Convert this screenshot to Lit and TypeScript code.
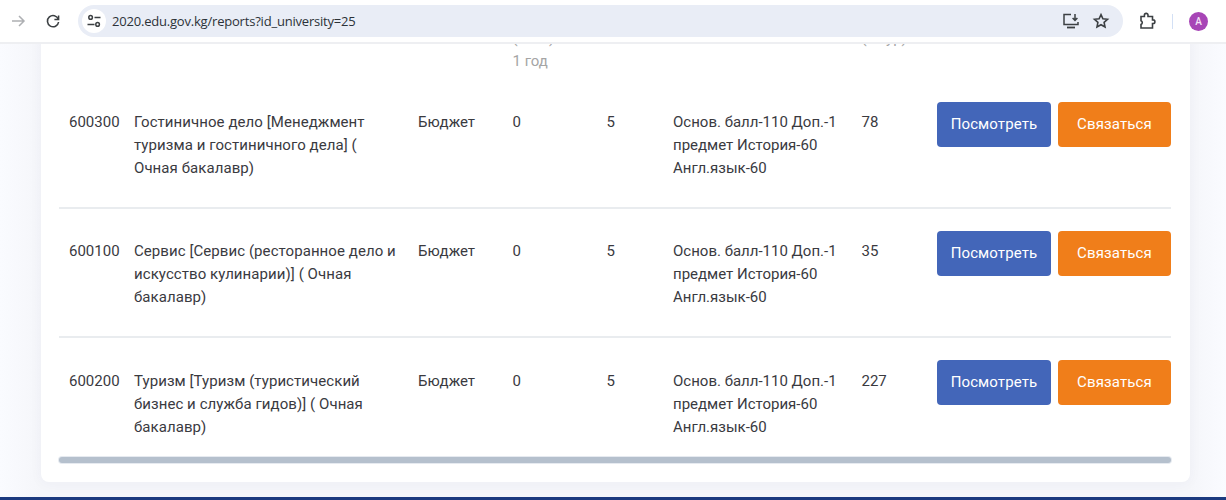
import { LitElement, html, css } from "lit";
import { customElement } from "lit/decorators.js";

const rows = [
  { code: "600300", name: "Гостиничное дело [Менеджмент туризма и гостиничного дела] ( Очная бакалавр)", score: "78" },
  { code: "600100", name: "Сервис [Сервис (ресторанное дело и искусство кулинарии)] ( Очная бакалавр)", score: "35" },
  { code: "600200", name: "Туризм [Туризм (туристический бизнес и служба гидов)] ( Очная бакалавр)", score: "227" },
];

@customElement("app-root")
export class AppRoot extends LitElement {
  static styles = css`
    :host { display: flex; flex-direction: column; width: 1226px; height: 500px; overflow: hidden; font-family: Roboto, sans-serif; background: #fff; }
    .toolbar { flex: none; box-sizing: border-box; display: flex; align-items: center; padding: 0 0 0 8px; background: #fff; border-bottom: 2px solid #eeeff2; height: 44px; }
    .navbtn { width: 20px; height: 20px; display: flex; flex: none; }
    .reload { margin-left: 15px; }
    .omni { flex: none; margin-left: 15px; width: 1045px; height: 32px; box-sizing: border-box; border-radius: 16px; background: #e9edf6; display: flex; align-items: center; padding: 0 13px 0 4px; }
    .tune { width: 24px; height: 24px; border-radius: 50%; background: #fff; display: flex; align-items: center; justify-content: center; flex: none; }
    .url { margin-left: 6px; font: 13px "Open Sans", sans-serif; letter-spacing: -0.2px; color: #2c3238; flex: 1; }
    .omni svg.i { margin-left: 10px; flex: none; }
    .omni svg.star { margin-left: 12px; }
    .ext { margin-left: 14px; flex: none; }
    .sep { width: 1px; height: 15px; background: #d3e0f5; margin-left: 15px; flex: none; }
    .avatar { width: 19px; height: 19px; border-radius: 50%; background: #a745b6; color: #f3e3f6; font: 500 10px Roboto, sans-serif; display: flex; align-items: center; justify-content: center; margin-left: 16px; flex: none; }

    .view { flex: 1; min-height: 0; overflow: hidden; display: flex; flex-direction: column; justify-content: flex-end; background: linear-gradient(90deg, #fafbff 0, #f5f6fa 41px, #f5f6fa 1190px, #fafbff 100%); }
    .wrap { flex: none; padding: 0 36px 0 41px; }
    .card { width: 1149px; box-sizing: border-box; background: #fff; border-radius: 0 0 8px 8px; padding: 0 19px 19px 18px; box-shadow: 0 2px 14px rgba(50, 50, 93, 0.04); }
    table { table-layout: fixed; width: 1112px; border-collapse: collapse; font-size: 15px; line-height: 23px; color: #3a3a3f; }
    th { font-weight: 400; color: #a5a5a5; text-align: left; vertical-align: top; padding: 0 10px 7px; white-space: nowrap; }
    td { vertical-align: top; padding: 31px 10px 27px; }
    td.name { letter-spacing: 0.07px; }
    tbody tr:not(:last-child) td { border-bottom: 2px solid #e9ecef; }
    tbody tr:last-child td { padding: 32px 10px 18px; }
    tbody tr td.act, tbody tr:last-child td.act { padding: 22px 0 0 10px; }
    .btns { display: flex; gap: 7px; }
    .btn { width: 114px; height: 45px; box-sizing: border-box; border-radius: 4px; display: flex; align-items: center; justify-content: center; color: #fff; font-size: 15px; font-weight: 400; letter-spacing: 0.12px; }
    .view-b { background: #4366b9; }
    .contact { background: #f07e1a; width: 113px; }
    .scroll { height: 6px; border-radius: 3px; background: #b5c0cd; width: 1112px; box-shadow: 0 0 0 1px #e6eaf0; }
    .foot { flex: none; height: 3px; margin-top: 15px; background: #1c3a7f; }
  `;

  render() {
    return html`
      <div class="toolbar">
        <svg class="navbtn" viewBox="0 0 20 20" fill="none" stroke="#aeb0b3" stroke-width="1.5"><path d="M4 10h12M11 5l5 5-5 5"/></svg>
        <svg class="navbtn reload" viewBox="0 0 20 20" fill="none" stroke="#3c4043" stroke-width="1.6"><path d="M15.3 8.2A5.6 5.6 0 1 0 15.6 11"/><path d="M15.6 4.4v4.2h-4.2" stroke-width="1.5"/></svg>
        <div class="omni">
          <div class="tune">
            <svg width="16" height="16" viewBox="0 0 16 16" fill="none" stroke="#3c4043" stroke-width="1.5"><circle cx="4.6" cy="4.4" r="1.8"/><path d="M8.5 4.4h6M1.5 11.4h7"/><circle cx="11.6" cy="11.4" r="1.8"/></svg>
          </div>
          <div class="url">2020.edu.gov.kg/reports?id_university=25</div>
          <svg class="i" width="18" height="18" viewBox="0 0 18 18" fill="none" stroke="#3c4043" stroke-width="1.5"><path d="M9 2.5H2v10h14V10"/><path d="M5 15.5h8" stroke-width="1.8"/><path d="M13 2v6M10.6 6l2.4 2.4L15.4 6"/></svg>
          <svg class="i star" width="18" height="18" viewBox="0 0 18 18" fill="none" stroke="#3c4043" stroke-width="1.6"><path d="M9 2.6l1.9 4.2 4.6.5-3.4 3.1.9 4.6L9 12.7 5 15l.9-4.6-3.4-3.1 4.6-.5z"/></svg>
        </div>
        <svg class="ext" width="20" height="20" viewBox="0 0 20 20" fill="none" stroke="#3c4043" stroke-width="1.6"><path d="M4 5.5h3.4V4.2a1.8 1.8 0 0 1 3.6 0v1.3h4.5v3.4h.6a1.8 1.8 0 0 1 0 3.6h-.6v4.5H4v-3.6a2 2 0 0 0 1.3-1.9A2 2 0 0 0 4 9.7z"/></svg>
        <div class="sep"></div>
        <div class="avatar">A</div>
      </div>
      <div class="view">
        <div class="wrap">
          <div class="card">
            <table>
              <colgroup>
                <col style="width:65px" /><col style="width:284px" /><col style="width:94.5px" /><col style="width:94px" />
                <col style="width:66.5px" /><col style="width:188.5px" /><col style="width:75.5px" /><col style="width:244px" />
              </colgroup>
              <thead>
                <tr>
                  <th></th><th></th><th></th>
                  <th>Контракт<br />(сом.)<br />1 год</th>
                  <th></th><th></th>
                  <th>Балл<br />(1 тур)</th>
                  <th></th>
                </tr>
              </thead>
              <tbody>
                ${rows.map(
                  (r) => html`
                    <tr>
                      <td>${r.code}</td>
                      <td class="name">${r.name}</td>
                      <td>Бюджет</td>
                      <td>0</td>
                      <td>5</td>
                      <td>Основ. балл-110 Доп.-1 предмет История-60 Англ.язык-60</td>
                      <td>${r.score}</td>
                      <td class="act">
                        <div class="btns">
                          <div class="btn view-b">Посмотреть</div>
                          <div class="btn contact">Связаться</div>
                        </div>
                      </td>
                    </tr>
                  `
                )}
              </tbody>
            </table>
            <div class="scroll"></div>
          </div>
        </div>
        <div class="foot"></div>
      </div>
    `;
  }
}
